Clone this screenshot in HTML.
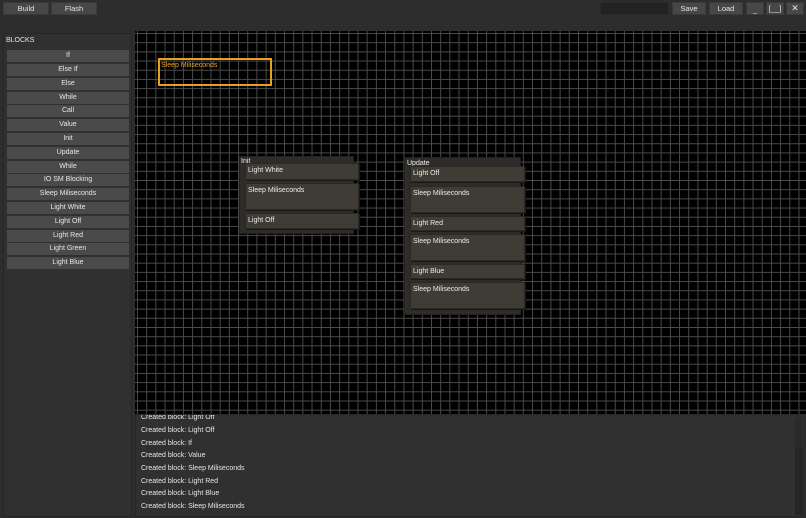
<!DOCTYPE html>
<html><head><style>
*{margin:0;padding:0;box-sizing:border-box}
body{width:806px;height:518px;background:#2d2d2d;font-family:"Liberation Sans",sans-serif;color:#ddd;position:relative;overflow:hidden;font-size:7.5px}
.abs{position:absolute}
.btn{position:absolute;background:#474747;border:1px solid #3a3a3a;color:#e6e6e6;text-align:center;font-size:7.5px;line-height:11px;height:13px}
#side{left:3px;top:33px;width:129px;height:484px;background:#303030;border:1px solid #262626}
.item{position:absolute;left:3px;width:122px;height:12px;background:#4a4a4a;color:#e8e8e8;text-align:center;font-size:7px;line-height:12px}
#grid{left:135px;top:31px;width:671px;height:383px;background-color:#000;
background-image:linear-gradient(to right,#4a4a4a 1px,transparent 1px),linear-gradient(to bottom,#4a4a4a 1px,transparent 1px);
background-size:9.2px 9.2px;background-position:2px 2px;overflow:hidden}
.cont{position:absolute;background:#2e2c28;border:1px solid #24221f}
.blk{position:absolute;background:#3f3b35;border:1px solid #2a2824;box-shadow:1px 1px 0 #1a1917;color:#eee;font-size:7px;padding:2px 2px;line-height:9px}
.lbl{position:absolute;font-size:7px;color:#eee}
#log{left:135px;top:414px;width:670px;height:103px;background:#303030;border:1px solid #262626;overflow:hidden}
.ln{position:absolute;left:5px;font-size:7px;color:#e6e6e6}
</style></head><body>
<div class="btn" style="left:3px;top:2px;width:46px">Build</div>
<div class="btn" style="left:51px;top:2px;width:46px">Flash</div>
<div class="abs" style="left:600px;top:2px;width:69px;height:13px;background:#222;border:1px solid #2a2a2a"></div>
<div class="btn" style="left:672px;top:2px;width:34px">Save</div>
<div class="btn" style="left:709px;top:2px;width:34px">Load</div>
<div class="btn" style="left:746px;top:2px;width:18px;line-height:13px">_</div>
<div class="btn" style="left:766px;top:2px;width:18px">[__]</div>
<div class="btn" style="left:786px;top:2px;width:18px;font-size:9px">✕</div>

<div id="side" class="abs">
<div class="abs" style="left:2px;top:3px;font-size:7px;color:#e6e6e6">BLOCKS</div>
<div class="item" style="top:16px">If</div>
<div class="item" style="top:30px">Else If</div>
<div class="item" style="top:44px">Else</div>
<div class="item" style="top:58px">While</div>
<div class="item" style="top:71px">Call</div>
<div class="item" style="top:85px">Value</div>
<div class="item" style="top:99px">Init</div>
<div class="item" style="top:113px">Update</div>
<div class="item" style="top:127px">While</div>
<div class="item" style="top:140px">IO SM Blocking</div>
<div class="item" style="top:154px">Sleep Miliseconds</div>
<div class="item" style="top:168px">Light White</div>
<div class="item" style="top:182px">Light Off</div>
<div class="item" style="top:196px">Light Red</div>
<div class="item" style="top:209px">Light Green</div>
<div class="item" style="top:223px">Light Blue</div>
</div>

<div id="grid" class="abs">
<div class="abs" style="left:23px;top:27px;width:114px;height:28px;border:2px solid #e6a020;color:#e6a830;font-size:7px;padding:2px 1px">Sleep Miliseconds</div>

<div class="cont" style="left:104px;top:125px;width:115px;height:78px"></div>
<div class="lbl" style="left:106px;top:127px">Init</div>
<div class="blk" style="left:110px;top:132px;width:114px;height:17px">Light White</div>
<div class="blk" style="left:110px;top:152px;width:114px;height:27px">Sleep Miliseconds</div>
<div class="blk" style="left:110px;top:182px;width:114px;height:16px">Light Off</div>

<div class="cont" style="left:269px;top:126px;width:117px;height:158px"></div>
<div class="lbl" style="left:272px;top:129px">Update</div>
<div class="blk" style="left:275px;top:135px;width:115px;height:16px">Light Off</div>
<div class="blk" style="left:275px;top:155px;width:115px;height:27px">Sleep Miliseconds</div>
<div class="blk" style="left:275px;top:185px;width:115px;height:15px">Light Red</div>
<div class="blk" style="left:275px;top:203px;width:115px;height:27px">Sleep Miliseconds</div>
<div class="blk" style="left:275px;top:233px;width:115px;height:15px">Light Blue</div>
<div class="blk" style="left:275px;top:251px;width:115px;height:27px">Sleep Miliseconds</div>
</div>

<div id="log" class="abs">
<div class="ln" style="top:-1px">Created block: Light Off</div>
<div class="ln" style="top:12px">Created block: Light Off</div>
<div class="ln" style="top:25px">Created block: If</div>
<div class="ln" style="top:37px">Created block: Value</div>
<div class="ln" style="top:50px">Created block: Sleep Miliseconds</div>
<div class="ln" style="top:63px">Created block: Light Red</div>
<div class="ln" style="top:75px">Created block: Light Blue</div>
<div class="ln" style="top:88px">Created block: Sleep Miliseconds</div>
<div class="abs" style="left:659px;top:2px;width:8px;height:98px;background:#2a2a2a"></div>
<div class="abs" style="left:659px;top:33px;width:8px;height:67px;background:#252525"></div>
</div>
</body></html>
